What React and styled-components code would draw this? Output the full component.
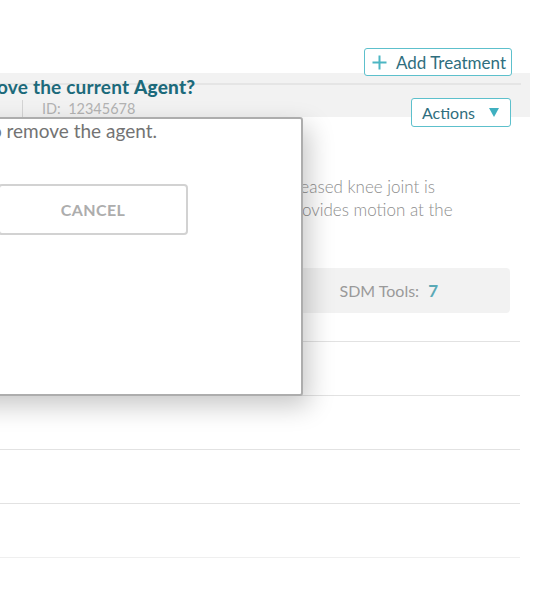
import React from "react";
import styled, { createGlobalStyle } from "styled-components";

const GlobalStyle = createGlobalStyle`
  html, body {
    margin: 0;
    padding: 0;
    background: #fff;
  }
  body {
    font-family: Lato, "Open Sans", "Liberation Sans", sans-serif;
    overflow: hidden;
  }
`;

const Page = styled.div`
  position: relative;
  width: 539px;
  height: 603px;
  overflow: hidden;
`;

const TopRow = styled.div`
  display: flex;
  justify-content: flex-end;
  padding: 48px 27px 0 0;
`;

const OutlineButton = styled.button`
  position: relative;
  z-index: 1;
  display: flex;
  align-items: center;
  gap: ${(p) => p.gap || 8}px;
  height: ${(p) => p.h}px;
  padding: 0 ${(p) => p.pr || 6}px 0 ${(p) => p.pl || 7}px;
  margin-bottom: ${(p) => p.mb || 0}px;
  background: #fff;
  border: 1px solid #5dc0cc;
  border-radius: 3px;
  color: #2f6e7e;
  font-family: Lato, "Open Sans", sans-serif;
  font-size: ${(p) => p.fs || 16}px;
  font-weight: 400;
  cursor: pointer;
`;

const Band = styled.div`
  margin: -3px 9px 0 0;
  height: 44px;
  background: #f2f2f2;
  display: flex;
  flex-direction: column;
`;

const BandRule = styled.div`
  margin: 10px 9px 0 0;
  height: 2px;
  background: #e5e5e5;
`;

const BandRow = styled.div`
  flex: 1;
  display: flex;
  align-items: flex-end;
  padding-right: 19px;
`;

const Sep = styled.div`
  width: 1px;
  height: 17px;
  margin-left: 22px;
  background: #d4d4d4;
`;

const IdText = styled.span`
  margin-left: 19px;
  font-size: 14.5px;
  line-height: 17px;
  color: #b3b3b3;
  flex: 1;
  white-space: pre;
`;

const Description = styled.p`
  margin: 58px 0 0 0;
  padding-left: 187px;
  font-size: 17px;
  line-height: 23px;
  color: #8e8e8e;
  font-weight: 300;
  white-space: nowrap;
`;

const SdmBox = styled.div`
  margin: 47px 29px 0 0;
  height: 45px;
  border-radius: 4px;
  background: #f2f2f2;
  display: flex;
  align-items: center;
  justify-content: flex-end;
  padding-right: 72px;
  gap: 9px;
`;

const SdmLabel = styled.span`
  font-size: 16px;
  color: #9a9a9a;
`;

const SdmValue = styled.span`
  font-size: 17px;
  font-weight: 700;
  color: #5aa9b6;
`;

const List = styled.div`
  margin: 28px 19px 0 0;
`;

const Row = styled.div`
  height: 53px;
  border-top: 1px solid ${(p) => (p.faint ? "#efefef" : "#e2e2e2")};
`;

const Dialog = styled.div`
  position: absolute;
  top: 76px;
  left: -257px;
  width: 560px;
`;

const DialogTitle = styled.h2`
  margin: 0;
  height: 41px;
  padding-left: 0;
  font-size: 19px;
  line-height: 22px;
  letter-spacing: 0.2px;
  font-weight: 700;
  color: #1c6a7b;
  white-space: nowrap;

  b {
    font-weight: 900;
  }
`;

const DialogBox = styled.div`
  box-sizing: border-box;
  height: 279px;
  background: #fff;
  border: 2px solid #adadad;
  border-radius: 3px;
  box-shadow: 6px 10px 26px rgba(0, 0, 0, 0.22);
  padding: 0 0 0 24px;
`;

const DialogText = styled.p`
  margin: 0;
  font-size: 19px;
  line-height: 24px;
  color: #737373;
  white-space: nowrap;
  padding-left: ${(p) => p.indent}px;
`;

const CancelButton = styled.button`
  display: block;
  margin: 41px 0 0 229px;
  width: 190px;
  height: 51px;
  background: #fff;
  border: 2px solid #d2d2d2;
  border-radius: 4px;
  font-family: Lato, "Open Sans", sans-serif;
  font-size: 16px;
  font-weight: 700;
  letter-spacing: 0.4px;
  color: #adadad;
  cursor: pointer;
`;

const PlusIcon = () => (
  <svg width="15" height="15" viewBox="0 0 15 15">
    <path d="M7.5 0.5v14M0.5 7.5h14" stroke="#4cb6c3" strokeWidth="2" fill="none" />
  </svg>
);

const Caret = () => (
  <svg width="10" height="9" viewBox="0 0 10 9">
    <path d="M0 0h10L5 9z" fill="#3fb0c0" />
  </svg>
);

export default function App() {
  return (
    <Page>
      <GlobalStyle />
      <TopRow>
        <OutlineButton h={28} gap={9} pl={7} pr={5} fs={17}>
          <PlusIcon />
          Add Treatment
        </OutlineButton>
      </TopRow>
      <Band>
        <BandRule />
        <BandRow>
          <Sep />
          <IdText>ID:  12345678</IdText>
          <OutlineButton h={29} mb={-10} gap={14} pl={10} pr={11}>
            Actions
            <Caret />
          </OutlineButton>
        </BandRow>
      </Band>
      <Description>
        replaces the diseased knee joint is
        <br />
        the knee and provides motion at the
      </Description>
      <SdmBox>
        <SdmLabel>SDM Tools:</SdmLabel>
        <SdmValue>7</SdmValue>
      </SdmBox>
      <List>
        <Row />
        <Row />
        <Row />
        <Row />
        <Row faint />
      </List>
      <Dialog>
        <DialogTitle>
          Are you sure you want to remove the current <b>Agent?</b>
        </DialogTitle>
        <DialogBox>
          <DialogText indent={7}>Please confirm you want to remove the agent.</DialogText>
          <CancelButton>CANCEL</CancelButton>
        </DialogBox>
      </Dialog>
    </Page>
  );
}
